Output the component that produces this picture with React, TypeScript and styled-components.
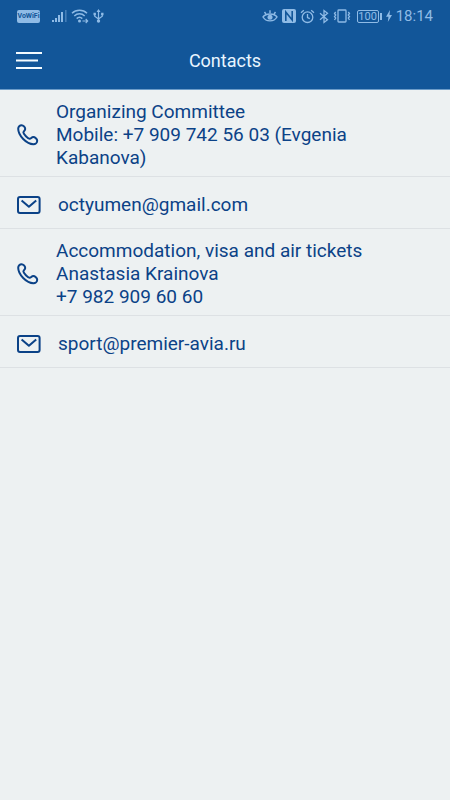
import React from "react";
import styled, { createGlobalStyle } from "styled-components";

const GlobalStyle = createGlobalStyle`
  * { box-sizing: border-box; }
  body {
    margin: 0;
    background: #edf1f2;
    font-family: Roboto, "Liberation Sans", sans-serif;
  }
`;

const Screen = styled.div`
  min-height: 100vh;
  background: #edf1f2;
  color: #0b4287;
`;

const StatusBar = styled.div`
  display: flex;
  align-items: center;
  justify-content: space-between;
  height: 32px;
  padding: 0 17px;
  background: #125699;
  color: #8fbbe6;
`;

const StatusGroup = styled.div`
  display: flex;
  align-items: center;
  gap: 4px;
  svg { display: block; flex: none; }
`;

const CallBadge = styled.span`
  width: 23px;
  height: 13px;
  margin-right: 8px;
  border-radius: 2px;
  background: #8fbbe6;
  color: #125699;
  font-size: 7px;
  font-weight: 700;
  line-height: 13px;
  text-align: center;
`;

const Battery = styled.span`
  display: flex;
  align-items: center;
  gap: 1px;
  margin-left: 2px;
`;

const BatteryLevel = styled.span`
  width: 22px;
  height: 13px;
  border: 1px solid #8fbbe6;
  border-radius: 2px;
  font-size: 11px;
  line-height: 12px;
  text-align: center;
`;

const BatteryTip = styled.span`
  width: 2px;
  height: 7px;
  background: #8fbbe6;
`;

const Clock = styled.time`
  font-size: 15px;
  line-height: 20px;
`;

const Header = styled.header`
  display: grid;
  grid-template-columns: 60px 1fr 60px;
  align-items: center;
  height: 58px;
  border-bottom: 1px solid #6c9cc9;
  background: #125699;
`;

const MenuButton = styled.button`
  display: block;
  width: 60px;
  height: 56px;
  padding: 0 16px;
  border: 0;
  background: none;
  color: #f4fbff;
  cursor: pointer;
  svg { display: block; }
`;

const Title = styled.h1`
  margin: 0;
  color: #e9f5ff;
  font-size: 18px;
  font-weight: 400;
  line-height: 24px;
  text-align: center;
`;

const ContactList = styled.ul`
  margin: 0;
  padding: 0;
  list-style: none;
`;

const ContactItem = styled.li`
  border-bottom: 1px solid #dde1e4;
`;

const ContactLink = styled.a<{ $kind: Kind }>`
  display: flex;
  align-items: center;
  gap: 17px;
  padding: ${(p) => (p.$kind === "phone" ? "10px 64px 7px 17px" : "16px 17px 12px")};
  color: inherit;
  text-decoration: none;
  svg { display: block; flex: none; }
`;

const ContactText = styled.span`
  font-size: 19px;
  line-height: 23px;
  white-space: pre-line;
`;

type Kind = "phone" | "mail";

const contacts: { kind: Kind; href: string; text: string }[] = [
  {
    kind: "phone",
    href: "tel:+79097425603",
    text: "Organizing Committee\nMobile: +7 909 742 56 03 (Evgenia Kabanova)",
  },
  { kind: "mail", href: "mailto:octyumen@gmail.com", text: "octyumen@gmail.com" },
  {
    kind: "phone",
    href: "tel:+79829096060",
    text: "Accommodation, visa and air tickets\nAnastasia Krainova\n+7 982 909 60 60",
  },
  { kind: "mail", href: "mailto:sport@premier-avia.ru", text: "sport@premier-avia.ru" },
];

const PhoneIcon = () => (
  <svg width="22" height="22" viewBox="0 0 22 22" fill="none" stroke="currentColor" strokeWidth="2" strokeLinejoin="round" aria-hidden="true">
    <path d="M1.2 4.8C1.2 11.5 9.5 20.2 16.4 20.2C18.4 20.2 20.2 18.6 20.2 16.7C20.2 14.9 18 13 16.2 13C14.6 13 14 14.8 12.6 14.8C11 14.8 6.4 10.1 6.4 8.6C6.4 7.2 8.2 6.6 8.2 5C8.2 3.2 6.3 1.2 4.6 1.2C2.8 1.2 1.2 2.8 1.2 4.8Z" />
  </svg>
);

const MailIcon = () => (
  <svg width="24" height="18" viewBox="0 0 24 18" fill="none" stroke="currentColor" strokeWidth="2" strokeLinejoin="round" aria-hidden="true">
    <rect x="1" y="1" width="21.6" height="16" rx="2" />
    <path d="M4.6 4.4L11.9 10.8L19.2 4.4" />
  </svg>
);

const SignalIcon = () => (
  <svg width="15" height="14" viewBox="0 0 15 14" fill="currentColor" aria-hidden="true">
    <path d="M0 11h2v2H0zM3 9h2v4H3zM6 6h2v7H6zM9 3h2v10H9z" />
    <path d="M13 1h1.6v12H13z" opacity="0.4" />
  </svg>
);

const WifiIcon = () => (
  <svg width="18" height="16" viewBox="0 0 18 16" fill="none" stroke="currentColor" strokeWidth="1.5" aria-hidden="true">
    <path d="M1 5.2C5 1.2 12 1.2 16 5.2M3.3 8C6.3 5 10.7 5 13.7 8M5.7 10.6C7.4 9 9.6 9 11.3 10.6" />
    <circle cx="8.5" cy="13" r="1.5" fill="currentColor" stroke="none" />
    <path d="M11.5 13h5M14.7 11l2 2-2 2" strokeWidth="1.1" />
  </svg>
);

const UsbIcon = () => (
  <svg width="11" height="16" viewBox="0 0 11 16" fill="none" stroke="currentColor" strokeWidth="1.2" aria-hidden="true">
    <path d="M5.5 2v11M1.7 6v2.2L5.5 11L9.3 8.2V6" />
    <path d="M3.5 4L5.5 1L7.5 4ZM.5 4.8h2.4v2.4H.5zM8.1 4.8h2.4v2.4H8.1z" fill="currentColor" stroke="none" />
    <circle cx="5.5" cy="13" r="1.7" fill="currentColor" stroke="none" />
  </svg>
);

const EyeIcon = () => (
  <svg width="16" height="14" viewBox="0 0 16 14" fill="none" stroke="currentColor" strokeWidth="1.4" aria-hidden="true">
    <path d="M1 8C4 4 12 4 15 8C12 13.2 4 13.2 1 8ZM2.5 3l1.4 2M8 1.2v2.8M13.5 3l-1.4 2" />
    <circle cx="8" cy="8.2" r="2.5" fill="currentColor" stroke="none" />
  </svg>
);

const NfcIcon = () => (
  <svg width="14" height="14" viewBox="0 0 14 14" aria-hidden="true">
    <rect width="14" height="14" rx="2" fill="currentColor" />
    <path d="M3.8 12V3L10.2 11V2" fill="none" stroke="#125699" strokeWidth="1.6" />
  </svg>
);

const AlarmIcon = () => (
  <svg width="15" height="15" viewBox="0 0 15 15" fill="none" stroke="currentColor" strokeWidth="1.3" aria-hidden="true">
    <circle cx="7.5" cy="8.2" r="5.3" />
    <path d="M7.5 5v3.5l2.3 1.2M1 3.8L3.8 1.3M14 3.8L11.2 1.3" />
  </svg>
);

const BluetoothIcon = () => (
  <svg width="10" height="15" viewBox="0 0 10 15" fill="none" stroke="currentColor" strokeWidth="1.3" aria-hidden="true">
    <path d="M1 4.3L8.5 10.7L5 13.5V1.5L8.5 4.3L1 10.7" />
  </svg>
);

const VibrateIcon = () => (
  <svg width="18" height="14" viewBox="0 0 18 14" fill="none" stroke="currentColor" strokeWidth="1.3" aria-hidden="true">
    <rect x="5" y="1" width="8" height="12" rx="0.8" />
    <path d="M2.7 3L1.5 4.5L2.7 6L1.5 7.5L2.7 9L1.5 11M15.3 3L16.5 4.5L15.3 6L16.5 7.5L15.3 9L16.5 11" />
  </svg>
);

const BoltIcon = () => (
  <svg width="6" height="12" viewBox="0 0 6 12" fill="currentColor" aria-hidden="true">
    <path d="M4 0L0 6.8H2.5L1.8 12L6 5H3.5Z" />
  </svg>
);

export default function App() {
  return (
    <Screen>
      <GlobalStyle />
      <StatusBar>
        <StatusGroup>
          <CallBadge>VoWiFi</CallBadge>
          <SignalIcon />
          <WifiIcon />
          <UsbIcon />
        </StatusGroup>
        <StatusGroup>
          <EyeIcon />
          <NfcIcon />
          <AlarmIcon />
          <BluetoothIcon />
          <VibrateIcon />
          <Battery>
            <BatteryLevel>100</BatteryLevel>
            <BatteryTip />
          </Battery>
          <BoltIcon />
          <Clock>18:14</Clock>
        </StatusGroup>
      </StatusBar>
      <Header>
        <MenuButton type="button" aria-label="Open menu">
          <svg width="26" height="20" viewBox="0 0 26 20" stroke="currentColor" strokeWidth="2.2" aria-hidden="true">
            <path d="M0 2H26M0 9.5H22M0 17H26" />
          </svg>
        </MenuButton>
        <Title>Contacts</Title>
      </Header>
      <main>
        <ContactList>
          {contacts.map((contact) => (
            <ContactItem key={contact.href}>
              <ContactLink href={contact.href} $kind={contact.kind}>
                {contact.kind === "phone" ? <PhoneIcon /> : <MailIcon />}
                <ContactText>{contact.text}</ContactText>
              </ContactLink>
            </ContactItem>
          ))}
        </ContactList>
      </main>
    </Screen>
  );
}
